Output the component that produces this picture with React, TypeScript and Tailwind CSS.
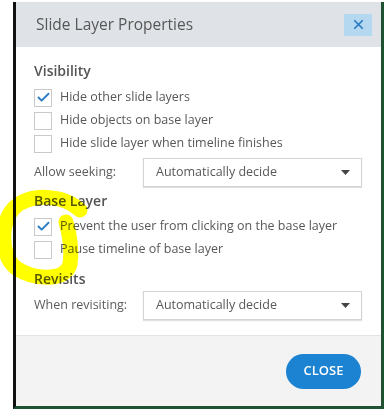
import { Check, X } from 'lucide-react';

const font = { fontFamily: '"Open Sans", "Noto Sans", sans-serif' };

function Checkbox({ checked, label }: { checked?: boolean; label: string }) {
  return (
    <div className="flex h-[23px] items-center">
      <div className="flex h-[18px] w-[18px] items-center justify-center border border-[#c9c9c9] bg-white">
        {checked && <Check size={15} strokeWidth={3} className="text-[#2b7cc3]" />}
      </div>
      <span className="ml-[8px] text-[12.5px] text-[#585858]">{label}</span>
    </div>
  );
}

function Select({ label, value }: { label: string; value: string }) {
  return (
    <div className="flex items-center">
      <span className="w-[109px] text-[12.5px] text-[#5c5c5c]">{label}</span>
      <div className="flex h-[29px] w-[219px] items-center justify-between border border-[#d3d3d3] bg-white pl-[12px] pr-[11px] shadow-[0_1px_1px_rgba(0,0,0,0.12)]">
        <span className="text-[12.5px] text-[#585858]">{value}</span>
        <svg width="9" height="5" viewBox="0 0 9 5">
          <path d="M0 0 L9 0 L4.5 5 Z" fill="#444" />
        </svg>
      </div>
    </div>
  );
}

function Heading({ children }: { children: string }) {
  return <div className="text-[14px] font-semibold leading-[18px] text-[#555]">{children}</div>;
}

export default function App() {
  return (
    <div className="relative h-[409px] w-[384px] overflow-hidden bg-white pl-[13px] pt-[2px]" style={font}>
      <div className="flex h-[407px] w-[371px] flex-col border-b-[3px] border-l-[3px] border-r-[3px] border-b-[#1f5133] border-l-[#111] border-r-[#1f5133]">
        {/* header */}
        <div className="flex h-[45px] items-center justify-between bg-[#dfe3e7] pl-[20px] pr-[9px]">
          <span className="text-[15.5px] text-[#575757]">Slide Layer Properties</span>
          <div className="flex h-[22px] w-[28px] items-center justify-center bg-[#b5d8f1]">
            <X size={15} strokeWidth={2.8} className="text-[#2b7cc3]" />
          </div>
        </div>

        {/* body */}
        <div className="flex-1 bg-white pl-[18px] pt-[15px]">
          <Heading>Visibility</Heading>
          <div className="mt-[6px]">
            <Checkbox checked label="Hide other slide layers" />
            <Checkbox label="Hide objects on base layer" />
            <Checkbox label="Hide slide layer when timeline finishes" />
          </div>
          <div className="mt-[3px]">
            <Select label="Allow seeking:" value="Automatically decide" />
          </div>
          <div className="mt-[5px]">
            <Heading>Base Layer</Heading>
          </div>
          <div className="mt-[5px]">
            <Checkbox checked label="Prevent the user from clicking on the base layer" />
            <Checkbox label="Pause timeline of base layer" />
          </div>
          <div className="mt-[9px]">
            <Heading>Revisits</Heading>
          </div>
          <div className="mt-[3px]">
            <Select label="When revisiting:" value="Automatically decide" />
          </div>
        </div>

        {/* footer */}
        <div className="flex h-[71px] items-center justify-end border-t border-[#e3e3e3] bg-[#f3f3f3] pr-[20px]">
          <button className="flex h-[35px] w-[75px] items-center justify-center rounded-full bg-[#1b83d1] text-[13px] font-semibold text-white">
            CLOSE
          </button>
        </div>
      </div>

      {/* yellow marker annotation */}
      <svg className="pointer-events-none absolute left-0 top-0 mix-blend-multiply" width="384" height="409">
        <path
          d="M80 210 C62 194 30 193 14 208 C0 222 0 256 16 268 C34 280 66 282 70 264 C72 250 70 236 66 222"
          fill="none"
          stroke="#ffff00"
          strokeWidth="15"
          strokeLinecap="round"
        />
      </svg>
    </div>
  );
}
